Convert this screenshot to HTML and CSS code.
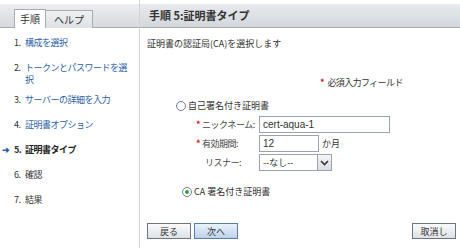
FILE: index.html
```html
<!DOCTYPE html>
<html lang="ja">
<head>
    <meta charset="UTF-8">
    <title>証明書タイプ</title>
    <link rel="stylesheet" href="styles.css">
</head>
<body>
    <div class="wizard">
        <div class="side">
            <div class="tabs">
                <div class="tab active">手順</div>
                <div class="tab">ヘルプ</div>
            </div>
            <ol class="steps">
                <li><span class="num">1.</span><a href="#">構成を選択</a></li>
                <li><span class="num">2.</span><a href="#">トークンとパスワードを選択</a></li>
                <li><span class="num">3.</span><a href="#">サーバーの詳細を入力</a></li>
                <li><span class="num">4.</span><a href="#">証明書オプション</a></li>
                <li class="current"><span class="arrow">&#10140;</span><span class="num">5.</span><span>証明書タイプ</span></li>
                <li class="todo"><span class="num">6.</span><span>確認</span></li>
                <li class="todo"><span class="num">7.</span><span>結果</span></li>
            </ol>
        </div>
        <div class="main">
            <div class="head">手順 5:証明書タイプ</div>
            <div class="body">
                <p class="intro">証明書の認証局(CA)を選択します</p>
                <p class="required"><span class="star">*</span> 必須入力フィールド</p>

                <label class="radio"><span class="dot"></span>自己署名付き証明書</label>
                <div class="fields">
                    <div class="row">
                        <span class="lbl"><span class="star">*</span>ニックネーム:</span>
                        <input class="txt wide" type="text" value="cert-aqua-1">
                    </div>
                    <div class="row">
                        <span class="lbl"><span class="star">*</span>有効期間:</span>
                        <input class="txt short" type="text" value="12">
                        <span class="unit">か月</span>
                    </div>
                    <div class="row">
                        <span class="lbl plain">リスナー:</span>
                        <div class="select">
                            <span>--なし--</span>
                            <span class="drop">
                                <svg width="9" height="6" viewBox="0 0 9 6"><path d="M1 1 L4.5 4.5 L8 1" fill="none" stroke="#333" stroke-width="1.6"/></svg>
                            </span>
                        </div>
                    </div>
                </div>

                <label class="radio checked"><span class="dot"></span>CA 署名付き証明書</label>

                <div class="buttons">
                    <button>戻る</button>
                    <button class="primary">次へ</button>
                    <span class="spacer"></span>
                    <button>取消し</button>
                </div>
            </div>
        </div>
    </div>
</body>
</html>
```

FILE: styles.css
```css
body {
    margin: 0;
    font-family: "Noto Sans CJK JP", "Liberation Sans", sans-serif;
    font-size: 9px;
    color: #333;
    background: #fff;
}

.wizard {
    display: flex;
    width: 460px;
    height: 248px;
}

.side {
    width: 139px;
    border-right: 1px solid #d0d2d4;
    flex-shrink: 0;
}

.tabs {
    margin-top: 4px;
    height: 23px;
    display: flex;
    align-items: flex-end;
    padding-left: 14px;
    background: linear-gradient(#eceef0, #d6d9dd);
    border-bottom: 1px solid #a8acb0;
}

.tab {
    box-sizing: border-box;
    height: 18px;
    line-height: 18px;
    border: 1px solid #a8acb0;
    border-bottom: none;
    background: linear-gradient(#eef0f2, #dfe2e5);
    color: #333;
    text-align: center;
    white-space: nowrap;
    font-size: 10px;
    margin-bottom: -1px;
}

.tab.active {
    background: #fff;
    height: 19px;
    width: 32px;
}

.tab + .tab {
    border-left: none;
    width: 47px;
}

.steps {
    list-style: none;
    margin: 0;
    padding: 9px 0 0 0;
    letter-spacing: -0.5px;
}

.steps li {
    position: relative;
    display: flex;
    padding: 0 10px 0 14px;
    line-height: 12px;
    margin-bottom: 13px;
}

.steps li:nth-child(2) {
    margin-bottom: 8px;
}

.num {
    width: 11px;
    flex-shrink: 0;
    color: #333;
}

.steps a {
    color: #2d5fa6;
    text-decoration: none;
}

.steps .current {
    font-weight: bold;
    color: #222;
}

.steps .todo {
    color: #333;
}

.arrow {
    position: absolute;
    left: 2px;
    top: 0;
    color: #2d5fa6;
    font-size: 9px;
    letter-spacing: 0;
}

.main {
    flex: 1;
    display: flex;
    flex-direction: column;
}

.head {
    margin-top: 4px;
    height: 23px;
    line-height: 23px;
    padding-left: 9px;
    font-size: 11px;
    font-weight: bold;
    color: #333;
    background: linear-gradient(#e8eaed, #d3d7dc);
    border-bottom: 1px solid #a8acb0;
}

.body {
    flex: 1;
    padding: 10px 4px 0 7px;
    display: flex;
    flex-direction: column;
}

.intro {
    margin: 0;
    line-height: 12px;
}

.required {
    margin: 27px 0 0 173px;
    line-height: 12px;
    letter-spacing: -0.6px;
}

.star {
    color: #d0121a;
    font-weight: bold;
    margin-right: 2px;
}

.radio {
    display: flex;
    align-items: center;
    margin: 11px 0 0 29px;
    line-height: 12px;
}

.dot {
    box-sizing: border-box;
    width: 10px;
    height: 10px;
    border: 1px solid #6b7f9a;
    border-radius: 50%;
    background: #fff;
    margin-right: 2px;
    position: relative;
}

.radio.checked {
    margin: 15px 0 0 35px;
}

.radio.checked .dot::after {
    content: "";
    position: absolute;
    left: 2px;
    top: 2px;
    width: 4px;
    height: 4px;
    border-radius: 50%;
    background: #3aa03a;
}

.fields {
    margin: 4px 0 0 49px;
    display: flex;
    flex-direction: column;
    gap: 2px;
}

.row {
    display: flex;
    align-items: center;
    height: 17px;
}

.lbl {
    width: 63px;
    color: #444;
    white-space: nowrap;
    letter-spacing: -0.5px;
}

.lbl.plain {
    padding-left: 9px;
    width: 54px;
}

.txt {
    box-sizing: border-box;
    height: 17px;
    border: 1px solid #9aa3ad;
    padding: 0 3px;
    font-family: "Liberation Sans", sans-serif;
    font-size: 10px;
    color: #333;
}

.wide {
    width: 131px;
}

.short {
    width: 60px;
}

.unit {
    margin-left: 3px;
}

.select {
    box-sizing: border-box;
    width: 73px;
    height: 17px;
    border: 1px solid #9aa3ad;
    display: flex;
    align-items: center;
    justify-content: space-between;
    padding-left: 3px;
}

.drop {
    width: 13px;
    height: 15px;
    background: linear-gradient(#f4f6f8, #d8dde3);
    border-left: 1px solid #9aa3ad;
    display: flex;
    align-items: center;
    justify-content: center;
}

.buttons {
    display: flex;
    margin-top: 25px;
    gap: 3px;
}

.spacer {
    flex: 1;
}

button {
    box-sizing: border-box;
    height: 16px;
    width: 44px;
    padding: 0;
    font-family: "Noto Sans CJK JP", sans-serif;
    font-size: 9px;
    color: #333;
    border: 1px solid #6c7680;
    background: linear-gradient(#fafbfc, #dde1e5);
}

button.primary {
    border-color: #5a7ea6;
    background: linear-gradient(#eaf2fb, #bcd2ea);
}
```
